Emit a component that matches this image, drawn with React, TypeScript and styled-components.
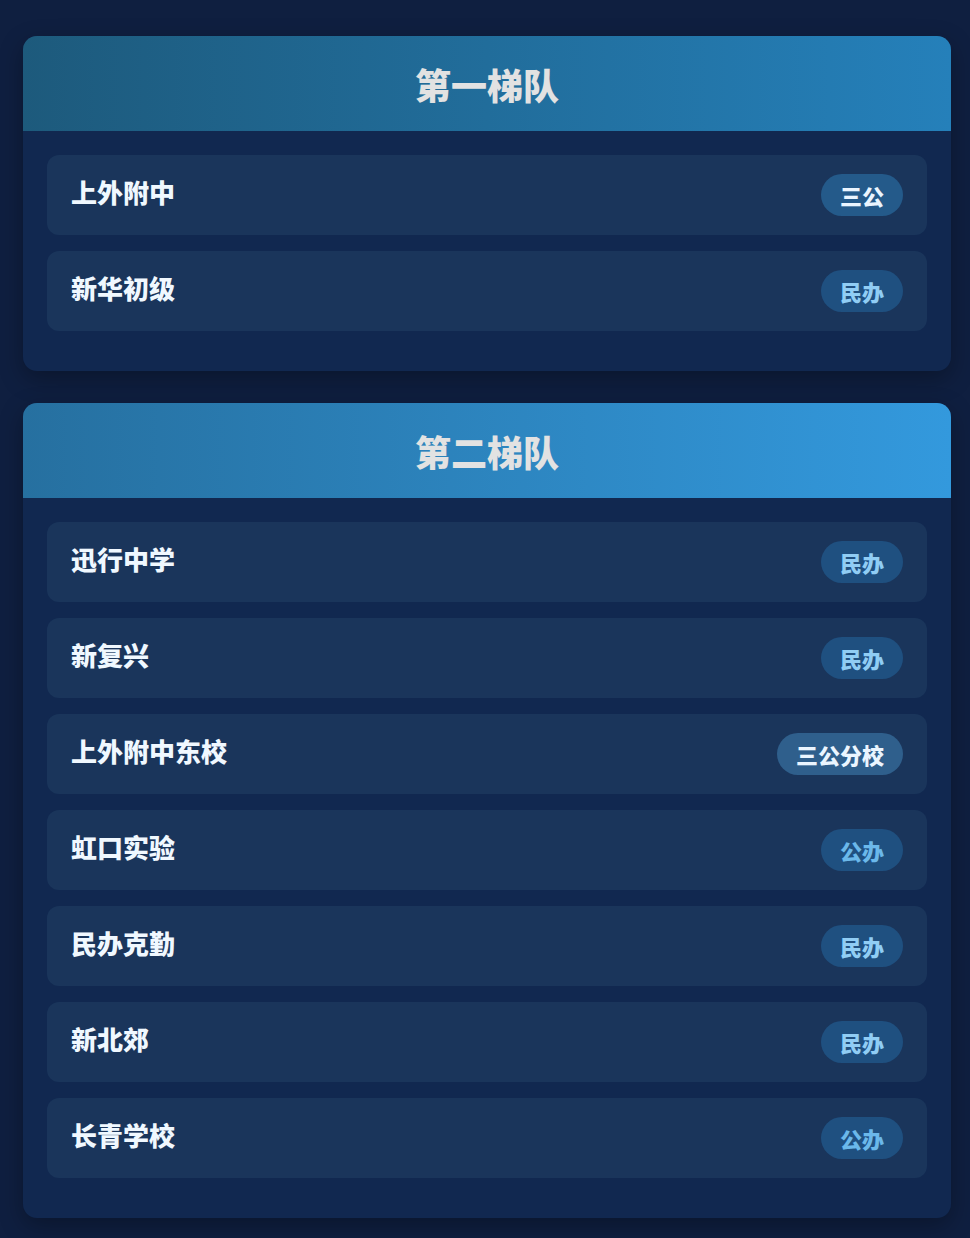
import React from "react";
import styled, { createGlobalStyle } from "styled-components";

const Global = createGlobalStyle`
  html, body { margin: 0; padding: 0; background: #0f1f40; }
  body { font-family: "Noto Sans CJK SC", "Noto Sans", sans-serif; }
`;

const Page = styled.div`
  min-height: 1238px;
  box-sizing: border-box;
  padding: 36px 19px 20px 23px;
  display: flex;
  flex-direction: column;
  gap: 32px;
  background: #0f1f40;
`;

const Card = styled.section`
  background: #112850;
  border-radius: 14px;
  overflow: hidden;
  box-shadow: 0 8px 24px rgba(0, 0, 0, 0.3);
`;

const Header = styled.div<{ $from: string; $to: string }>`
  height: 95px;
  display: flex;
  align-items: center;
  justify-content: center;
  background: linear-gradient(90deg, ${(p) => p.$from}, ${(p) => p.$to});
`;

const Title = styled.h2`
  margin: 0;
  font-size: 36px;
  font-weight: 900;
  color: #e2e2e2;
  letter-spacing: 0;
`;

const Body = styled.div`
  padding: 24px 24px 40px;
  display: flex;
  flex-direction: column;
  gap: 16px;
`;

const Row = styled.div`
  height: 80px;
  box-sizing: border-box;
  padding: 0 24px;
  border-radius: 12px;
  background: #1a355b;
  display: flex;
  align-items: center;
  justify-content: space-between;
`;

const Name = styled.span`
  font-size: 26px;
  font-weight: 900;
  color: #f0f8ff;
  margin-top: -8px;
`;

type Kind = "sangong" | "fenxiao" | "minban" | "gongban";

const badgeBg: Record<Kind, string> = {
  sangong: "#245a8a",
  fenxiao: "#2f5f8c",
  minban: "#1f5080",
  gongban: "#1f5080",
};
const badgeFg: Record<Kind, string> = {
  sangong: "#eaf5ff",
  fenxiao: "#eaf5ff",
  minban: "#90cdf4",
  gongban: "#6bb8ea",
};

const Badge = styled.span<{ $kind: Kind }>`
  height: 42px;
  box-sizing: border-box;
  padding: 0 19px;
  border-radius: 21px;
  display: inline-flex;
  align-items: center;
  font-size: 22px;
  font-weight: 900;
  background: ${(p) => badgeBg[p.$kind]};
  color: ${(p) => badgeFg[p.$kind]};
`;

const kindOf = (t: string): Kind =>
  t === "三公" ? "sangong" : t === "三公分校" ? "fenxiao" : t === "民办" ? "minban" : "gongban";

const tiers = [
  {
    title: "第一梯队",
    from: "#1d5a7c",
    to: "#2580ba",
    items: [
      ["上外附中", "三公"],
      ["新华初级", "民办"],
    ],
  },
  {
    title: "第二梯队",
    from: "#2670a0",
    to: "#3399dd",
    items: [
      ["迅行中学", "民办"],
      ["新复兴", "民办"],
      ["上外附中东校", "三公分校"],
      ["虹口实验", "公办"],
      ["民办克勤", "民办"],
      ["新北郊", "民办"],
      ["长青学校", "公办"],
    ],
  },
];

export default function App() {
  return (
    <>
      <Global />
      <Page>
        {tiers.map((t) => (
          <Card key={t.title}>
            <Header $from={t.from} $to={t.to}>
              <Title>{t.title}</Title>
            </Header>
            <Body>
              {t.items.map(([n, b]) => (
                <Row key={n}>
                  <Name>{n}</Name>
                  <Badge $kind={kindOf(b)}>{b}</Badge>
                </Row>
              ))}
            </Body>
          </Card>
        ))}
      </Page>
    </>
  );
}
